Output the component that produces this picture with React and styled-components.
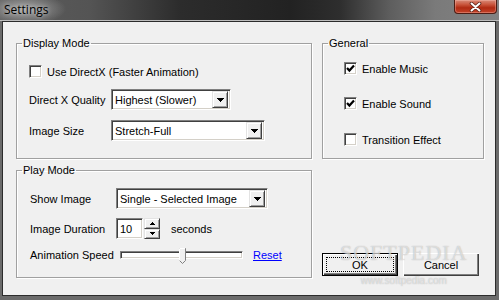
import React from 'react';
import styled, { createGlobalStyle } from 'styled-components';

const COLORS = {
  frame: '#6b6b6b',
  face: '#f0f0f0',
  etch: '#a0a0a0',
  dark: '#404040',
  shadow: '#808080',
  text: '#000',
  link: '#0000ff',
};

const GlobalStyle = createGlobalStyle`
  html, body { margin: 0; padding: 0; background: ${COLORS.frame}; }
  body {
    font-family: 'Liberation Sans', Arial, sans-serif;
    font-size: 11px;
    color: ${COLORS.text};
  }
`;

const Window = styled.div`
  position: relative;
  width: 499px;
  height: 300px;
  display: flex;
  flex-direction: column;
  background: ${COLORS.frame};
  overflow: hidden;
`;

const TitleBar = styled.div`
  height: 20px;
  flex: none;
  display: flex;
  justify-content: space-between;
  align-items: flex-start;
  padding: 0 2px 0 4px;
  border-bottom: 1px solid #bdbdbd;
  background:
    radial-gradient(ellipse 42px 16px at 24px 9px, rgba(175, 175, 175, 0.9), rgba(175, 175, 175, 0) 100%),
    linear-gradient(to right, #5c5c5c 0px, #545454 90px, #2c2c2c 180px, #222 290px, #2e2e2e 340px, #5e5e5e 390px, #7a7a7a 435px, #828282 499px);
`;

const Title = styled.span`
  font-family: 'Open Sans', 'Liberation Sans', sans-serif;
  font-size: 12px;
  line-height: 19px;
  color: #000;
  text-shadow: 0 0 4px rgba(255, 255, 255, 0.6);
`;

const CloseButton = styled.div`
  width: 43px;
  height: 14px;
  box-sizing: border-box;
  display: flex;
  align-items: center;
  justify-content: center;
  border: 1px solid #4d1d14;
  border-top: none;
  border-radius: 0 0 4px 4px;
  background: linear-gradient(to bottom, #d88a78 0%, #c9553c 35%, #b02a12 60%, #c4442a 100%);
  box-shadow: inset 0 0 0 1px rgba(255, 200, 190, 0.35);
`;

const Client = styled.div`
  flex: 1;
  margin: 0 3px 4px 2px;
  border: 1px solid #2c2c2c;
  background: ${COLORS.face};
  padding: 15px 0 0 13px;
`;

const Panels = styled.div`
  display: flex;
  gap: 10px;
`;

const Column = styled.div`
  width: ${p => p.$w}px;
  flex: none;
  display: flex;
  flex-direction: column;
  gap: 5px;
  justify-content: ${p => (p.$spread ? 'space-between' : 'flex-start')};
`;

const Group = styled.fieldset`
  margin: 0;
  padding: 0;
  min-width: 0;
  box-sizing: border-box;
  height: ${p => p.$h}px;
  border: 1px solid ${COLORS.etch};
  box-shadow: 1px 1px 0 #fff, inset 1px 1px 0 #fff;
`;

const Legend = styled.legend`
  margin-left: 5px;
  padding: 0 1px;
  line-height: 13px;
  font-size: 11px;
`;

const GroupBody = styled.div`
  display: flex;
  flex-direction: column;
  padding-left: ${p => p.$pl}px;
`;

const Row = styled.div`
  display: flex;
  align-items: center;
  height: 21px;
  margin-top: ${p => p.$mt}px;
`;

const Label = styled.span`
  width: ${p => p.$w}px;
  flex: none;
  white-space: nowrap;
`;

const CheckLabel = styled.label`
  display: flex;
  align-items: center;
  gap: 5px;
  white-space: nowrap;
`;

const Box = styled.span`
  width: 13px;
  height: 13px;
  box-sizing: border-box;
  flex: none;
  display: flex;
  align-items: center;
  justify-content: center;
  background: #fff;
  border: 1px solid;
  border-color: ${COLORS.shadow} #fff #fff ${COLORS.shadow};
  box-shadow: inset 1px 1px 0 ${COLORS.dark}, inset -1px -1px 0 #d4d0c8;
`;

const Sunken = styled.div`
  width: ${p => p.$w}px;
  height: 21px;
  box-sizing: border-box;
  flex: none;
  display: flex;
  align-items: center;
  background: #fff;
  border: 1px solid;
  border-color: ${COLORS.shadow} #fff #fff ${COLORS.shadow};
  box-shadow: inset 1px 1px 0 ${COLORS.dark}, inset -1px -1px 0 #d4d0c8;
  padding: 2px;
`;

const FieldText = styled.span`
  flex: 1;
  padding-left: 1px;
  white-space: nowrap;
  overflow: hidden;
`;

const Raised = styled.div`
  box-sizing: border-box;
  display: flex;
  align-items: center;
  justify-content: center;
  background: ${COLORS.face};
  border: 1px solid;
  border-color: #e3e3e3 ${COLORS.dark} ${COLORS.dark} #e3e3e3;
  box-shadow: inset 1px 1px 0 #fff, inset -1px -1px 0 ${COLORS.etch};
`;

const DropButton = styled(Raised)`
  width: 16px;
  height: 17px;
  flex: none;
`;

const SpinWrap = styled.div`
  display: flex;
  align-items: center;
`;

const SpinButtons = styled.div`
  display: flex;
  flex-direction: column;
  width: 16px;
  height: 21px;
  margin-left: 1px;
`;

const SpinButton = styled(Raised)`
  flex: 1;
`;

const Unit = styled.span`
  margin-left: 11px;
`;

const Track = styled.div`
  position: relative;
  width: 123px;
  height: 8px;
  box-sizing: border-box;
  margin-left: 4px;
  background: #fff;
  border: 1px solid;
  border-color: ${COLORS.shadow} #fff #fff ${COLORS.shadow};
  box-shadow: inset 1px 1px 0 ${COLORS.dark}, inset -1px -1px 0 #d4d0c8;
`;

const Thumb = styled.svg`
  position: absolute;
  top: -4px;
  overflow: visible;
`;

const Link = styled.a`
  margin-left: 10px;
  color: ${COLORS.link};
  text-decoration: underline;
  cursor: pointer;
`;

const ButtonRow = styled.div`
  display: flex;
  gap: 5px;
  margin-bottom: 2px;
`;

const Button = styled.button`
  width: 76px;
  height: 23px;
  box-sizing: border-box;
  padding: 0;
  font-family: inherit;
  font-size: 11px;
  color: #000;
  background: ${COLORS.face};
  display: flex;
  align-items: center;
  justify-content: center;
  border: ${p => (p.$default ? '1px solid #000' : 'none')};
  box-shadow:
    inset 1px 1px 0 #fff,
    inset -1px -1px 0 ${COLORS.dark},
    inset -2px -2px 0 ${COLORS.shadow};
`;

const FocusRing = styled.span`
  display: flex;
  align-items: center;
  justify-content: center;
  width: 66px;
  height: 13px;
  border: 1px dotted #000;
`;

const Watermark = styled.div`
  position: absolute;
  left: 340px;
  top: 241px;
  display: flex;
  flex-direction: column;
  align-items: center;
  pointer-events: none;
  color: rgba(255, 255, 255, 0.55);
  text-shadow: 0 0 1px rgba(110, 110, 110, 0.55);
`;

const WatermarkBig = styled.span`
  font-family: 'Liberation Serif', serif;
  font-size: 22px;
  letter-spacing: 1px;
  line-height: 24px;
`;

const WatermarkSmall = styled.span`
  font-size: 10px;
  line-height: 12px;
  margin-top: 10px;
`;

const Arrow = ({ w = 7, h = 4, up }) => (
  <svg width={w} height={h} viewBox={`0 0 ${w} ${h}`} shapeRendering="crispEdges">
    <polygon points={up ? `${w / 2},0 ${w},${h} 0,${h}` : `0,0 ${w},0 ${w / 2},${h}`} fill="#000" />
  </svg>
);

const Check = () => (
  <svg width="9" height="9" viewBox="0 0 9 9">
    <polyline points="1,4 3.4,6.6 8,1.6" fill="none" stroke="#000" strokeWidth="2.2" />
  </svg>
);

const Checkbox = ({ checked, children }) => (
  <CheckLabel>
    <Box>{checked && <Check />}</Box>
    {children}
  </CheckLabel>
);

const Combo = ({ w, value }) => (
  <Sunken $w={w}>
    <FieldText>{value}</FieldText>
    <DropButton>
      <Arrow />
    </DropButton>
  </Sunken>
);

const Slider = ({ value }) => (
  <Track>
    <Thumb width="7" height="16" viewBox="0 0 7 16" style={{ left: `${value * 115}px` }}>
      <polygon points="0.5,0.5 6.5,0.5 6.5,12.5 3.5,15.5 0.5,12.5" fill="#f0f0f0" stroke="#808080" />
      <polyline points="0.5,12.5 0.5,0.5 6,0.5" fill="none" stroke="#fff" />
    </Thumb>
  </Track>
);

const App = () => (
  <Window>
    <GlobalStyle />
    <TitleBar>
      <Title>Settings</Title>
      <CloseButton>
        <svg width="13" height="10" viewBox="0 0 13 10">
          <path d="M2.5 1.5 L10.5 8.5 M10.5 1.5 L2.5 8.5" stroke="#5a2218" strokeWidth="3.6" strokeLinecap="round" />
          <path d="M2.5 1.5 L10.5 8.5 M10.5 1.5 L2.5 8.5" stroke="#fff" strokeWidth="2" strokeLinecap="round" />
        </svg>
      </CloseButton>
    </TitleBar>
    <Client>
      <Panels>
        <Column $w={296}>
          <Group $h={122}>
            <Legend>Display Mode</Legend>
            <GroupBody $pl={12}>
              <Row $mt={11}>
                <Checkbox>Use DirectX (Faster Animation)</Checkbox>
              </Row>
              <Row $mt={7}>
                <Label $w={82}>Direct X Quality</Label>
                <Combo w={120} value="Highest (Slower)" />
              </Row>
              <Row $mt={10}>
                <Label $w={82}>Image Size</Label>
                <Combo w={154} value="Stretch-Full" />
              </Row>
            </GroupBody>
          </Group>
          <Group $h={114}>
            <Legend>Play Mode</Legend>
            <GroupBody $pl={13}>
              <Row $mt={11}>
                <Label $w={86}>Show Image</Label>
                <Combo w={152} value="Single - Selected Image" />
              </Row>
              <Row $mt={9}>
                <Label $w={86}>Image Duration</Label>
                <SpinWrap>
                  <Sunken $w={27}>
                    <FieldText>10</FieldText>
                  </Sunken>
                  <SpinButtons>
                    <SpinButton>
                      <Arrow w={5} h={3} up />
                    </SpinButton>
                    <SpinButton>
                      <Arrow w={5} h={3} />
                    </SpinButton>
                  </SpinButtons>
                </SpinWrap>
                <Unit>seconds</Unit>
              </Row>
              <Row $mt={5}>
                <Label $w={86}>Animation Speed</Label>
                <Slider value={0.5} />
                <Link>Reset</Link>
              </Row>
            </GroupBody>
          </Group>
        </Column>
        <Column $w={162} $spread>
          <Group $h={122}>
            <Legend>General</Legend>
            <GroupBody $pl={21}>
              <Row $mt={8}>
                <Checkbox checked>Enable Music</Checkbox>
              </Row>
              <Row $mt={14}>
                <Checkbox checked>Enable Sound</Checkbox>
              </Row>
              <Row $mt={15}>
                <Checkbox>Transition Effect</Checkbox>
              </Row>
            </GroupBody>
          </Group>
          <ButtonRow>
            <Button $default>
              <FocusRing>OK</FocusRing>
            </Button>
            <Button>Cancel</Button>
          </ButtonRow>
        </Column>
      </Panels>
    </Client>
    <Watermark>
      <WatermarkBig>SOFTPEDIA</WatermarkBig>
      <WatermarkSmall>www.softpedia.com</WatermarkSmall>
    </Watermark>
  </Window>
);

export default App;
